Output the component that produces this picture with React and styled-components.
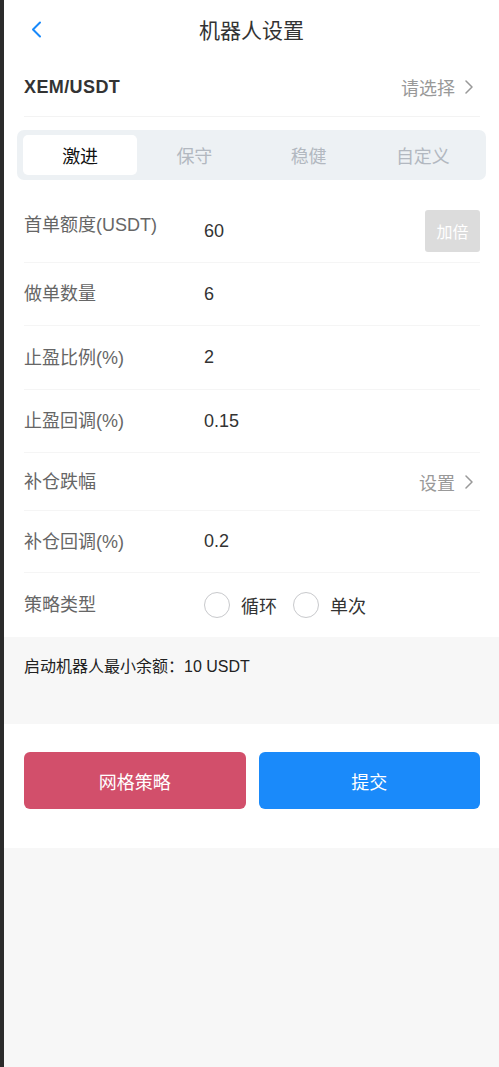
import styled, { createGlobalStyle } from 'styled-components'

const GlobalStyle = createGlobalStyle`
  html, body {
    margin: 0;
    padding: 0;
    background: #f7f7f7;
  }
  body {
    font-family: "Liberation Sans", "Noto Sans CJK SC", sans-serif;
    color: #323233;
  }
  * {
    box-sizing: border-box;
  }
`

const Page = styled.div`
  min-height: 100vh;
  border-left: 4px solid #2b2b2b;
  background: #f7f7f7;
`

const Panel = styled.div`
  background: #fff;
`

const Header = styled.div`
  position: relative;
  display: flex;
  align-items: center;
  justify-content: center;
  height: 58px;
`

const Back = styled.div`
  position: absolute;
  left: 27px;
  top: 21px;
  display: flex;
`

const Title = styled.div`
  font-size: 21px;
  color: #333;
`

const Inset = styled.div`
  padding: 0 19px 0 20px;
`

const PairRow = styled.div`
  display: flex;
  align-items: center;
  justify-content: space-between;
  height: 59px;
  border-bottom: 1px solid #f3f3f3;
`

const Pair = styled.div`
  font-size: 18px;
  font-weight: bold;
  letter-spacing: 0.4px;
  color: #333;
`

const Pick = styled.div`
  display: flex;
  align-items: center;
  gap: 10px;
  font-size: 18px;
  color: #999;
  padding-right: 7px;
`

const Tabs = styled.div`
  display: grid;
  grid-template-columns: repeat(4, 1fr);
  margin: 13px 13px 0;
  padding: 5px 6px;
  background: #edf1f4;
  border-radius: 7px;
`

const Tab = styled.div`
  display: flex;
  align-items: center;
  justify-content: center;
  height: 40px;
  font-size: 18px;
  border-radius: 5px;
  color: ${(p) => (p.$active ? '#111' : '#b2b8c0')};
  background: ${(p) => (p.$active ? '#fff' : 'transparent')};
`

const Form = styled.div`
  margin-top: 20px;
`

const Row = styled.div`
  display: flex;
  align-items: center;
  min-height: ${(p) => p.$h}px;
  padding: ${(p) => (p.$pad ? '10px 0' : '0')};
  border-bottom: ${(p) => (p.$last ? 'none' : '1px solid #f5f5f5')};
`

const Label = styled.div`
  width: 180px;
  flex-shrink: 0;
  font-size: 18px;
  line-height: 24px;
  color: #666;
  align-self: ${(p) => (p.$top ? 'flex-start' : 'center')};
  margin-top: ${(p) => (p.$top ? '3px' : '0')};
`

const Value = styled.div`
  flex: 1;
  font-size: 18px;
  color: #333;
`

const DoubleBtn = styled.div`
  display: flex;
  align-items: center;
  justify-content: center;
  width: 55px;
  height: 42px;
  background: #dcdcdc;
  border-radius: 3px;
  color: #fff;
  font-size: 16px;
`

const Radios = styled.div`
  display: flex;
  align-items: center;
`

const Radio = styled.div`
  display: flex;
  align-items: center;
  gap: 11px;
  margin-right: 16px;
  font-size: 18px;
  color: #333;
`

const Circle = styled.span`
  width: 26px;
  height: 26px;
  border: 1.5px solid #c8c9cc;
  border-radius: 50%;
`

const Note = styled.div`
  height: 87px;
  padding: 16px 20px 0;
  font-size: 16px;
  color: #222;
`

const Actions = styled.div`
  display: flex;
  gap: 13px;
  padding: 28px 19px 39px 20px;
  background: #fff;
`

const ActionBtn = styled.button`
  flex: 1;
  height: 57px;
  border: none;
  border-radius: 6px;
  background: ${(p) => p.$color};
  color: #fff;
  font-size: 18px;
  font-family: inherit;
`

const Chevron = ({ color = '#999', w = 8, h = 14, sw = 1.5 }) => (
  <svg width={w} height={h} viewBox={`0 0 ${w} ${h}`} fill="none">
    <polyline
      points={`1,1 ${w - 1},${h / 2} 1,${h - 1}`}
      stroke={color}
      strokeWidth={sw}
      strokeLinecap="round"
      strokeLinejoin="round"
    />
  </svg>
)

const BackIcon = () => (
  <svg width="11" height="17" viewBox="0 0 11 17" fill="none">
    <polyline
      points="9,1.5 2,8.5 9,15.5"
      stroke="#1989fa"
      strokeWidth="2"
      strokeLinecap="round"
      strokeLinejoin="round"
    />
  </svg>
)

const tabs = ['激进', '保守', '稳健', '自定义']

const App = () => (
  <Page>
    <GlobalStyle />
    <Panel>
      <Header>
        <Back>
          <BackIcon />
        </Back>
        <Title>机器人设置</Title>
      </Header>
      <Inset>
        <PairRow>
          <Pair>XEM/USDT</Pair>
          <Pick>
            请选择
            <Chevron />
          </Pick>
        </PairRow>
      </Inset>
      <Tabs>
        {tabs.map((t, i) => (
          <Tab key={t} $active={i === 0}>
            {t}
          </Tab>
        ))}
      </Tabs>
      <Inset>
        <Form>
          <Row $h={62} $pad>
            <Label $top>首单额度(USDT)</Label>
            <Value>60</Value>
            <DoubleBtn>加倍</DoubleBtn>
          </Row>
          <Row $h={63}>
            <Label>做单数量</Label>
            <Value>6</Value>
          </Row>
          <Row $h={64}>
            <Label>止盈比例(%)</Label>
            <Value>2</Value>
          </Row>
          <Row $h={63}>
            <Label>止盈回调(%)</Label>
            <Value>0.15</Value>
          </Row>
          <Row $h={58}>
            <Label>补仓跌幅</Label>
            <Value />
            <Pick>
              设置
              <Chevron />
            </Pick>
          </Row>
          <Row $h={62}>
            <Label>补仓回调(%)</Label>
            <Value>0.2</Value>
          </Row>
          <Row $h={64} $last>
            <Label>策略类型</Label>
            <Radios>
              <Radio>
                <Circle />
                循环
              </Radio>
              <Radio>
                <Circle />
                单次
              </Radio>
            </Radios>
          </Row>
        </Form>
      </Inset>
    </Panel>
    <Note>启动机器人最小余额：10 USDT</Note>
    <Actions>
      <ActionBtn $color="#d24f6b">网格策略</ActionBtn>
      <ActionBtn $color="#1a8afa">提交</ActionBtn>
    </Actions>
  </Page>
)

export default App
